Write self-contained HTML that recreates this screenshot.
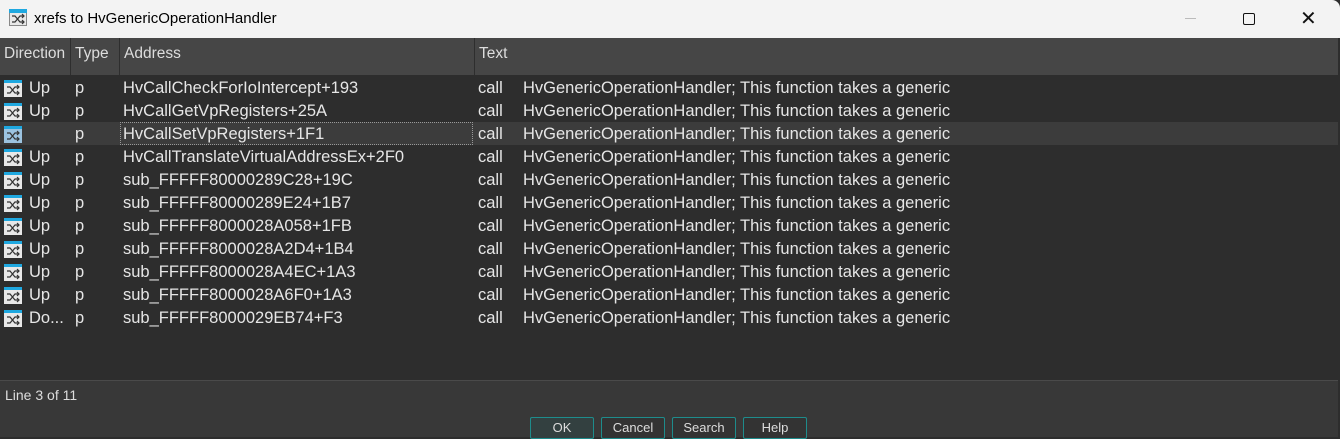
<!DOCTYPE html>
<html><head><meta charset="utf-8"><style>
*{margin:0;padding:0;box-sizing:border-box}
body{width:1340px;height:437px;background:#2d2d2d;font-family:"Liberation Sans",sans-serif;overflow:hidden;position:relative}
.title{position:absolute;left:0;top:0;width:1340px;height:38px;background:#f3f3f3;border-top-right-radius:8px}
.title span{position:absolute;left:34px;top:10px;font-size:15px;color:#000}
.hdr{position:absolute;left:0;top:38px;width:1338px;height:37px;background:#464646;color:#ddd;font-size:15.5px}
.hdr div{position:absolute;top:7px}
.sep{position:absolute;top:0;width:1px;height:37px;background:#2e2e2e}
.row{position:absolute;left:0;width:1338px;height:23px;color:#e6e6e6;font-size:16.5px}
.row span{position:absolute;top:3px;white-space:nowrap}
.ic{position:absolute;left:4px;top:4px;width:18px;height:17px}
.bottom{position:absolute;left:0;top:380px;width:1338px;height:57px;background:#383838;border-top:1px solid #4a4a4a}
.btn{position:absolute;top:36px;height:22px;border:1px solid #1e8c8c;border-radius:2px;color:#ddd;font-size:13px;text-align:center;line-height:20px;background:#333}
</style></head><body>
<div class="title"><svg class="ic" style="left:9px;top:9px" viewBox="0 0 18 17"><rect x="0.5" y="0.5" width="17" height="16" fill="#e8e8e8" stroke="#888"/><rect x="0" y="0" width="18" height="4" fill="#1fa8e0"/><path d="M3 7h3l5 6h4M3 13h3l5-6h4M13 5l2 2-2 2M13 11l2 2-2 2" stroke="#333" fill="none" stroke-width="1.2"/></svg><span>xrefs to HvGenericOperationHandler</span>
<div style="position:absolute;left:1185px;top:18px;width:11px;height:1px;background:#bbb"></div>
<div style="position:absolute;left:1243px;top:13px;width:12px;height:12px;border:1.5px solid #111;border-radius:2px"></div>
<div style="position:absolute;left:1300px;top:11px;font-size:20px;color:#111;line-height:16px">✕</div>
</div>
<div class="hdr">
<div style="left:4px">Direction</div><div class="sep" style="left:70px;top:0"></div>
<div style="left:75px">Type</div><div class="sep" style="left:119px;top:0"></div>
<div style="left:124px">Address</div><div class="sep" style="left:474px;top:0"></div>
<div style="left:479px">Text</div>
</div>
<div id="rows"></div>
<div class="bottom"><div style="position:absolute;left:5px;top:6px;color:#ddd;font-size:14px">Line 3 of 11</div>
<div class="btn" style="left:530px;width:64px;background:#334040">OK</div>
<div class="btn" style="left:601px;width:64px">Cancel</div>
<div class="btn" style="left:672px;width:64px">Search</div>
<div class="btn" style="left:743px;width:64px">Help</div>
</div>
<script>
var d=[["Up","HvCallCheckForIoIntercept+193"],["Up","HvCallGetVpRegisters+25A"],["","HvCallSetVpRegisters+1F1"],["Up","HvCallTranslateVirtualAddressEx+2F0"],["Up","sub_FFFFF80000289C28+19C"],["Up","sub_FFFFF80000289E24+1B7"],["Up","sub_FFFFF8000028A058+1FB"],["Up","sub_FFFFF8000028A2D4+1B4"],["Up","sub_FFFFF8000028A4EC+1A3"],["Up","sub_FFFFF8000028A6F0+1A3"],["Do...","sub_FFFFF8000029EB74+F3"]];
var h="";d.forEach(function(r,i){var y=76+i*23;var sel=i==2;
var ic='<svg class="ic" viewBox="0 0 18 17"><rect x="0" y="0" width="18" height="17" fill="'+(sel?'#9cc3e0':'#e8e8e8')+'"/><rect x="0" y="0" width="18" height="3" fill="#1fa8e0"/><path d="M3 7h3l5 6h4M3 13h3l5-6h4M13 5l2 2-2 2M13 11l2 2-2 2" stroke="#333" fill="none" stroke-width="1.2"/></svg>';
h+='<div class="row" style="top:'+y+'px;'+(sel?'background:#3c3c3c':'')+'">'+ic+'<span style="left:29px">'+r[0]+'</span><span style="left:75px">p</span>'+(sel?'<div style="position:absolute;left:120px;top:0;width:353px;height:23px;border:1px dotted #999"></div>':'')+'<span style="left:123px">'+r[1]+'</span><span style="left:478px">call</span><span style="left:523px">HvGenericOperationHandler; This function takes a generic</span></div>';});
document.getElementById("rows").innerHTML=h;
</script>
</body></html>
